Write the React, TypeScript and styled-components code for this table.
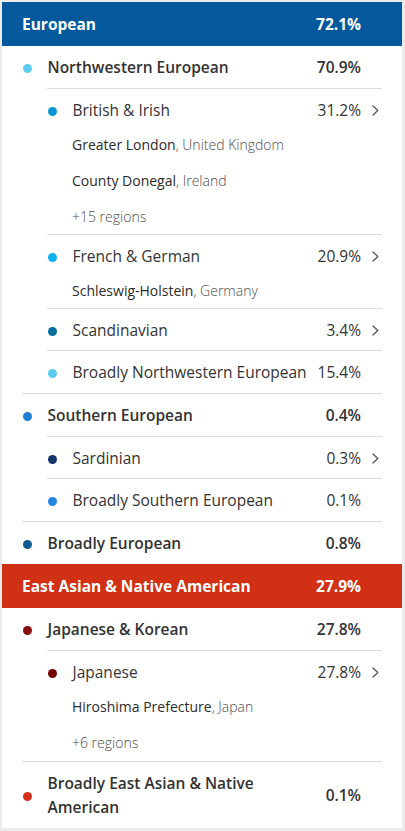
import React from "react";
import styled, { createGlobalStyle } from "styled-components";

const GlobalStyle = createGlobalStyle`
  html, body { margin: 0; padding: 0; background: #ebebeb; }
  body { font-family: "Open Sans", "Noto Sans", sans-serif; color: #333; -webkit-font-smoothing: antialiased; }
`;

type Child = {
  name: string;
  pct: string;
  dot: string;
  chevron?: boolean;
  regions?: [string, string][];
  more?: string;
};
type Group = { name: string; pct: string; dot: string; children?: Child[] };
type Section = { title: string; pct: string; color: string; groups: Group[] };

const data: Section[] = [
  {
    title: "European",
    pct: "72.1%",
    color: "#03599b",
    groups: [
      {
        name: "Northwestern European",
        pct: "70.9%",
        dot: "#5ccbf1",
        children: [
          {
            name: "British & Irish",
            pct: "31.2%",
            dot: "#0b96d1",
            chevron: true,
            regions: [
              ["Greater London", "United Kingdom"],
              ["County Donegal", "Ireland"],
            ],
            more: "+15 regions",
          },
          {
            name: "French & German",
            pct: "20.9%",
            dot: "#0fb2ef",
            chevron: true,
            regions: [["Schleswig-Holstein", "Germany"]],
          },
          { name: "Scandinavian", pct: "3.4%", dot: "#07709a", chevron: true },
          { name: "Broadly Northwestern European", pct: "15.4%", dot: "#5ccbf1" },
        ],
      },
      {
        name: "Southern European",
        pct: "0.4%",
        dot: "#1f7ed8",
        children: [
          { name: "Sardinian", pct: "0.3%", dot: "#14346c", chevron: true },
          { name: "Broadly Southern European", pct: "0.1%", dot: "#2385e2" },
        ],
      },
      { name: "Broadly European", pct: "0.8%", dot: "#0c5b95" },
    ],
  },
  {
    title: "East Asian & Native American",
    pct: "27.9%",
    color: "#d03014",
    groups: [
      {
        name: "Japanese & Korean",
        pct: "27.8%",
        dot: "#8a0d0d",
        children: [
          {
            name: "Japanese",
            pct: "27.8%",
            dot: "#750303",
            chevron: true,
            regions: [["Hiroshima Prefecture", "Japan"]],
            more: "+6 regions",
          },
        ],
      },
      { name: "Broadly East Asian & Native American", pct: "0.1%", dot: "#d5301a" },
    ],
  },
];

const Card = styled.div`
  margin: 2px 3px 4px 2px;
  background: #fff;
  width: 400px;
`;

const Header = styled.div<{ $bg: string }>`
  display: flex;
  align-items: center;
  justify-content: space-between;
  height: 44px;
  padding: 0 41px 0 20px;
  background: ${(p) => p.$bg};
  color: #fff;
  font-weight: 700;
  font-size: 15.5px;
`;

const GroupBox = styled.div<{ $last: boolean }>`
  margin: 0 20px;
  border-bottom: ${(p) => (p.$last ? "none" : "1px solid #dedede")};
`;

const ChildList = styled.div`
  margin-left: 25px;
`;

const ChildBox = styled.div<{ $regions: boolean }>`
  border-top: 1px solid #dedede;
  padding: 9px 0 ${(p) => (p.$regions ? 7 : 8)}px;
  &:last-child {
    padding-bottom: ${(p) => (p.$regions ? 8 : 9)}px;
  }
`;

const GroupRowBox = styled.div`
  padding: 9px 0 9px;
`;

const MainLine = styled.div<{ $strong: boolean }>`
  display: flex;
  align-items: center;
  font-size: 15.5px;
  line-height: 24px;
  font-weight: ${(p) => (p.$strong ? 600 : 400)};
  white-space: ${(p) => (p.$strong ? "normal" : "nowrap")};
  color: #333;
`;

const Dot = styled.span<{ $color: string }>`
  flex: 0 0 auto;
  width: 9px;
  height: 9px;
  border-radius: 50%;
  background: ${(p) => p.$color};
  margin: 2px 16px 0 0.5px;
`;

const Label = styled.span`
  flex: 1 1 auto;
`;

const Pct = styled.span`
  flex: 0 0 auto;
  margin-left: 6px;
`;

const ChevronSlot = styled.span`
  flex: 0 0 21px;
  display: flex;
  align-items: center;
  padding-left: 11px;
  box-sizing: border-box;
  height: 24px;
`;

const Regions = styled.div`
  padding-left: 25px;
  margin-top: 13px;
  display: flex;
  flex-direction: column;
  gap: 16px;
`;

const RegionLine = styled.div`
  font-size: 14px;
  line-height: 20px;
  color: #4d4d4d;
  font-weight: 300;
`;

const Place = styled.span`
  color: #2b2b2b;
  font-weight: 400;
`;

const Chevron = () => (
  <svg width="7" height="11" viewBox="0 0 7 11" fill="none">
    <path d="M1 1l4.8 4.5L1 10" stroke="#555" strokeWidth="1.3" strokeLinecap="round" strokeLinejoin="round" />
  </svg>
);

const Line = ({
  name,
  pct,
  dot,
  strong,
  chevron,
}: {
  name: string;
  pct: string;
  dot: string;
  strong: boolean;
  chevron?: boolean;
}) => (
  <MainLine $strong={strong}>
    <Dot $color={dot} />
    <Label>{name}</Label>
    <Pct>{pct}</Pct>
    <ChevronSlot>{chevron ? <Chevron /> : null}</ChevronSlot>
  </MainLine>
);

export default function App() {
  return (
    <>
      <GlobalStyle />
      <Card>
        {data.map((s) => (
          <section key={s.title}>
            <Header $bg={s.color}>
              <span>{s.title}</span>
              <span>{s.pct}</span>
            </Header>
            {s.groups.map((g, gi) => (
              <GroupBox key={g.name} $last={gi === s.groups.length - 1}>
                <GroupRowBox>
                  <Line name={g.name} pct={g.pct} dot={g.dot} strong />
                </GroupRowBox>
                {g.children && (
                  <ChildList>
                    {g.children.map((c) => {
                      const hasRegions = Boolean(c.regions || c.more);
                      return (
                        <ChildBox key={c.name} $regions={hasRegions}>
                          <Line name={c.name} pct={c.pct} dot={c.dot} strong={false} chevron={c.chevron} />
                          {hasRegions && (
                            <Regions>
                              {c.regions?.map(([place, country]) => (
                                <RegionLine key={place}>
                                  <Place>{place}</Place>, {country}
                                </RegionLine>
                              ))}
                              {c.more && <RegionLine>{c.more}</RegionLine>}
                            </Regions>
                          )}
                        </ChildBox>
                      );
                    })}
                  </ChildList>
                )}
              </GroupBox>
            ))}
          </section>
        ))}
      </Card>
    </>
  );
}
